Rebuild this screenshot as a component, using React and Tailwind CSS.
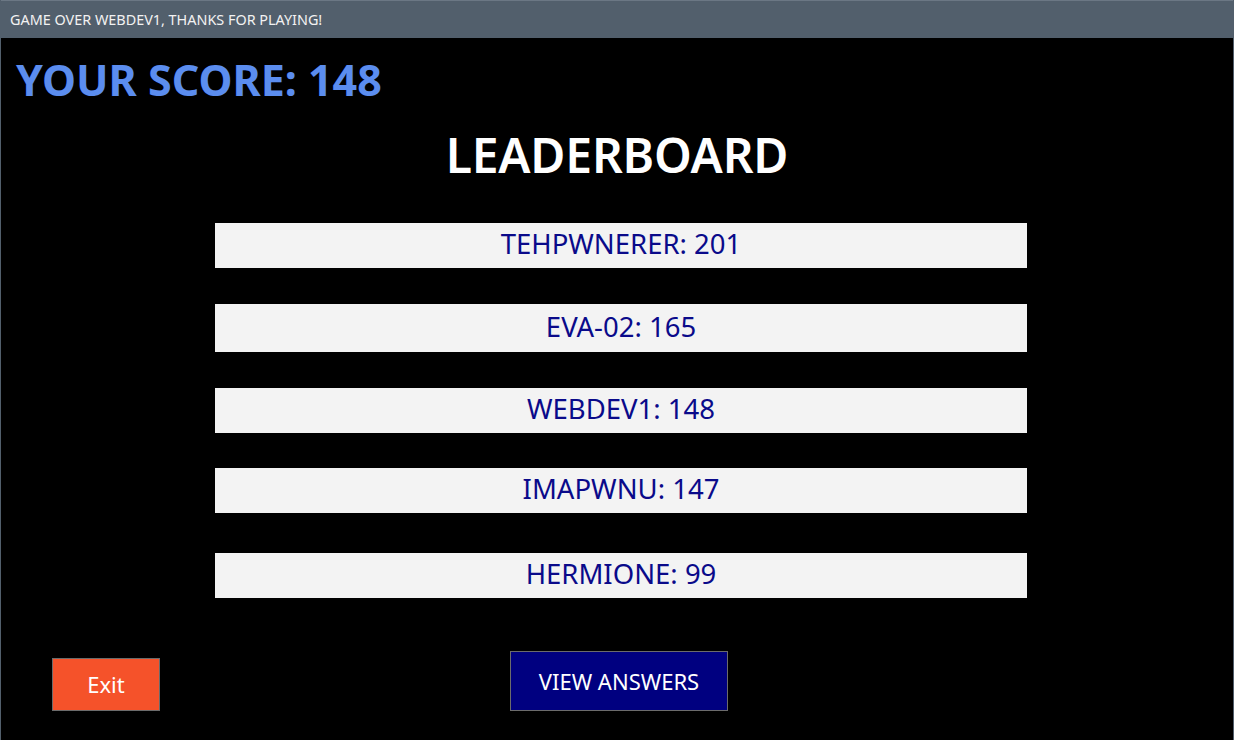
import React from "react";

const scores = [
  { name: "TEHPWNERER", score: 201, h: "h-[45px]", mt: "mt-0" },
  { name: "EVA-02", score: 165, h: "h-[48px]", mt: "mt-[36px]" },
  { name: "WEBDEV1", score: 148, h: "h-[45px]", mt: "mt-[36px]" },
  { name: "IMAPWNU", score: 147, h: "h-[45px]", mt: "mt-[35px]" },
  { name: "HERMIONE", score: 99, h: "h-[45px]", mt: "mt-[40px]" },
];

export default function App() {
  return (
    <div
      className="w-[1234px] h-[740px] bg-black border-x border-[#525f6c] flex flex-col overflow-hidden"
      style={{ fontFamily: '"Noto Sans", "Open Sans", sans-serif' }}
    >
      {/* title bar */}
      <div className="h-[38px] bg-[#525f6c] border-t border-[#6b7784] flex items-center pl-[9px] text-[14.4px] text-[#f2f2f2] shrink-0">
        GAME OVER WEBDEV1, THANKS FOR PLAYING!
      </div>

      <div className="relative flex-1">
        <h2 className="pl-[15px] pt-[14px] text-[43px] leading-[56px] font-bold text-[#5b8def]">
          YOUR SCORE: 148
        </h2>
        <h1 className="text-center text-[48px] leading-[62px] font-semibold text-white mt-[16px] tracking-[-0.2px]">
          LEADERBOARD
        </h1>

        <div className="mt-[37px] ml-[214px] w-[812px] flex flex-col">
          {scores.map((s) => (
            <div
              key={s.name}
              className={`${s.h} ${s.mt} bg-[#f3f3f3] flex items-center justify-center pb-[3px] text-[27.5px] text-[#0a0a8a]`}
            >
              {s.name}: {s.score}
            </div>
          ))}
        </div>

        <div className="relative mt-[53px] h-[60px]">
          <button className="absolute left-[51px] top-[7px] w-[108px] h-[53px] bg-[#f5522a] border border-[#6b6b6b] text-white text-[22px]">
            Exit
          </button>
          <button className="absolute left-[509px] top-0 w-[218px] h-[60px] bg-[#000080] border border-[#6b6b6b] text-white text-[22px]">
            VIEW ANSWERS
          </button>
        </div>
      </div>
    </div>
  );
}
